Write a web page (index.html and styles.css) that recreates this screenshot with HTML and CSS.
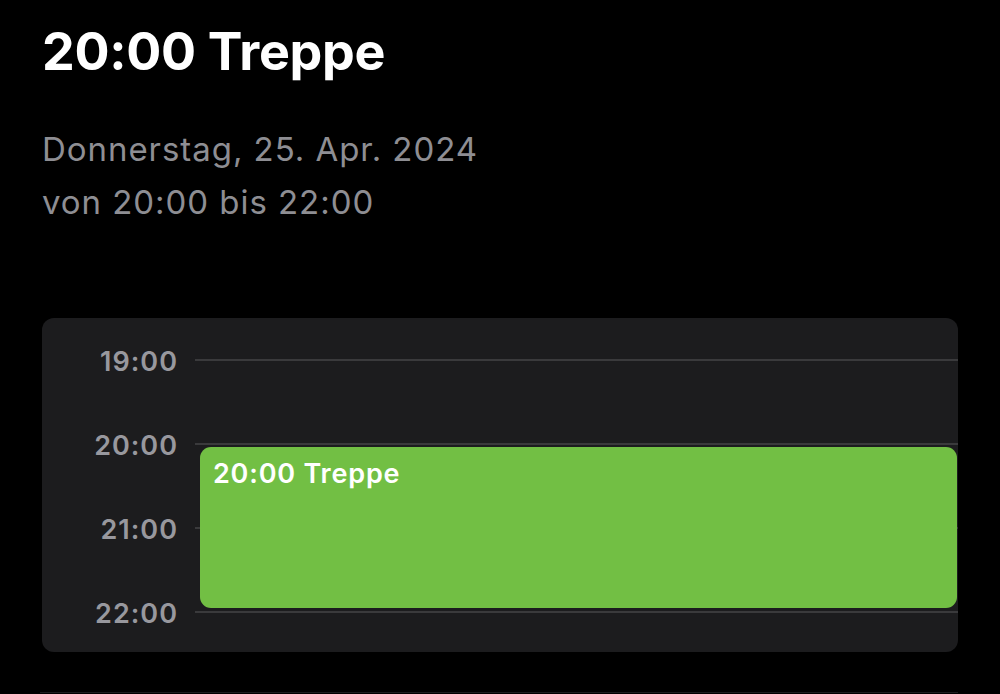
FILE: index.html
```html
<!DOCTYPE html>
<html lang="de">
<head>
<meta charset="utf-8">
<title>20:00 Treppe</title>
<link rel="stylesheet" href="styles.css">
</head>
<body>
<main class="page">
  <h1 class="title">20:00 Treppe</h1>
  <div class="subtitle">
    <div>Donnerstag, 25. Apr. 2024</div>
    <div>von 20:00 bis 22:00</div>
  </div>
  <section class="card">
    <div class="row"><span class="hour">19:00</span><span class="line"></span></div>
    <div class="row"><span class="hour">20:00</span><span class="line"></span></div>
    <div class="row"><span class="hour">21:00</span><span class="line"></span></div>
    <div class="row"><span class="hour">22:00</span><span class="line"></span></div>
    <div class="event">20:00 Treppe</div>
  </section>
  <div class="divider"></div>
</main>
</body>
</html>
```

FILE: styles.css
```css
html, body {
  margin: 0;
  padding: 0;
  background: #000;
}
body {
  width: 1000px;
  height: 694px;
  overflow: hidden;
  font-family: Inter, "Noto Sans", "Liberation Sans", sans-serif;
  color: #fff;
}
.page {
  padding: 21px 42px 0 42px;
}
.title {
  margin: 0;
  font-size: 52px;
  line-height: 62px;
  font-weight: 700;
  letter-spacing: -0.3px;
  color: #fff;
}
.subtitle {
  margin-top: 40px;
  font-size: 33px;
  line-height: 53px;
  font-weight: 400;
  letter-spacing: 0.95px;
  color: #8e8e93;
}
.card {
  position: relative;
  margin-top: 89px;
  background: #1c1c1e;
  border-radius: 12px;
  padding: 29px 0 27px;
  display: flex;
  flex-direction: column;
  gap: 58px;
}
.row {
  display: flex;
  align-items: center;
  height: 26px;
  gap: 17px;
}
.hour {
  width: 136px;
  padding-top: 4px;
  text-align: right;
  font-size: 27px;
  line-height: 26px;
  font-weight: 600;
  letter-spacing: 1px;
  color: #98989e;
}
.line {
  flex: 1;
  height: 2px;
  background: #3a3a3c;
}
.event {
  position: absolute;
  top: 129px;
  left: 158px;
  right: 1px;
  height: 161px;
  box-sizing: border-box;
  padding: 12px 13px;
  background: #72bf44;
  border-radius: 11px;
  font-size: 27px;
  line-height: 30px;
  font-weight: 600;
  letter-spacing: 0.8px;
  color: #fff;
}
.divider {
  margin-top: 40px;
  margin-left: -2px;
  height: 1px;
  background: #1c1c1e;
}
```
